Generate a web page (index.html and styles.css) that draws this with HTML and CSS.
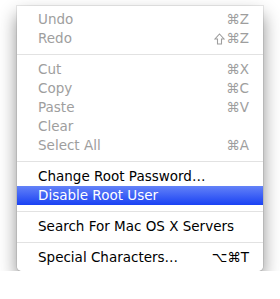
FILE: index.html
```html
<!DOCTYPE html>
<html>
<head>
<meta charset="utf-8">
<link rel="stylesheet" href="styles.css">
</head>
<body>
<div class="menu">
  <div class="item disabled"><span class="label">Undo</span><span class="key">⌘Z</span></div>
  <div class="item disabled"><span class="label">Redo</span><span class="key"><svg class="shift" width="11" height="12" viewBox="0 0 11 12"><path d="M5.5 1 L10 6 H7.5 V11 H3.5 V6 H1 Z" fill="none" stroke="currentColor" stroke-width="1.1" stroke-linejoin="miter"/></svg>⌘Z</span></div>
  <div class="sep"></div>
  <div class="item disabled"><span class="label">Cut</span><span class="key">⌘X</span></div>
  <div class="item disabled"><span class="label">Copy</span><span class="key">⌘C</span></div>
  <div class="item disabled"><span class="label">Paste</span><span class="key">⌘V</span></div>
  <div class="item disabled"><span class="label">Clear</span><span class="key"></span></div>
  <div class="item disabled"><span class="label">Select All</span><span class="key">⌘A</span></div>
  <div class="sep"></div>
  <div class="item"><span class="label">Change Root Password…</span><span class="key"></span></div>
  <div class="item selected"><span class="label">Disable Root User</span><span class="key"></span></div>
  <div class="sep"></div>
  <div class="item"><span class="label">Search For Mac OS X Servers</span><span class="key"></span></div>
  <div class="sep"></div>
  <div class="item"><span class="label">Special Characters…</span><span class="key">⌥⌘T</span></div>
</div>
</body>
</html>
```
FILE: styles.css
```css
html, body {
  margin: 0;
  padding: 0;
  background: #ffffff;
}
body {
  padding: 6px 0 0 17px;
  font-family: "DejaVu Sans", "Lucida Grande", sans-serif;
  font-size: 13.5px;
}
.menu {
  width: 246px;
  box-sizing: border-box;
  padding: 4px 0;
  background: rgba(255, 255, 255, 0.97);
  border-radius: 0 0 5px 5px;
  box-shadow: 0 0 0 1px rgba(0, 0, 0, 0.08), 0 9px 18px rgba(0, 0, 0, 0.45);
  display: flex;
  flex-direction: column;
}
.item {
  height: 19px;
  display: flex;
  align-items: center;
  justify-content: space-between;
  padding: 0 14px 0 21px;
  color: #000000;
  line-height: 19px;
}
.item.disabled {
  color: #9e9e9e;
}
.item.selected {
  background: linear-gradient(#6382f8, #1a42f3);
  color: #ffffff;
}
.key {
  white-space: nowrap;
  display: flex;
  align-items: center;
}
.shift {
  margin-right: 1px;
}
.sep {
  height: 12px;
  display: flex;
  align-items: center;
}
.sep::before {
  content: "";
  display: block;
  width: 100%;
  height: 1px;
  background: #e2e2e2;
}
```
